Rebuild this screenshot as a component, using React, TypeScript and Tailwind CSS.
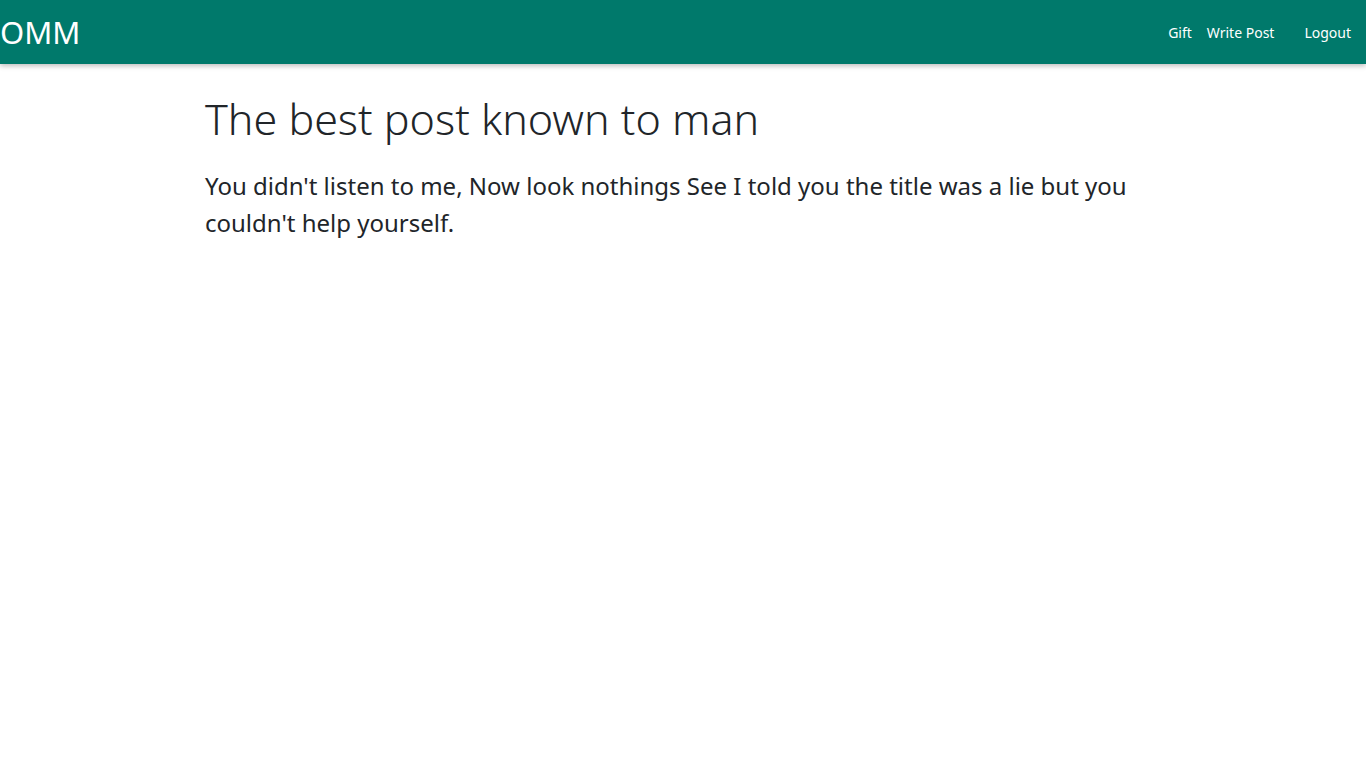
import React from 'react';

const App = () => {
  return (
    <div className="min-h-screen bg-white text-[#212529]" style={{ fontFamily: '"Noto Sans", "Open Sans", sans-serif' }}>
      <nav className="h-16 bg-[#00796b] shadow-[0_2px_5px_rgba(0,0,0,0.26)] flex items-center justify-between text-white">
        <span className="text-[31px] leading-none">OMM</span>
        <div className="flex items-center text-[14px] pr-[15px]">
          <a>Gift</a>
          <a className="pl-[15px]">Write Post</a>
          <a className="pl-[30px]">Logout</a>
        </div>
      </nav>

      <main className="w-[956px] mx-auto pt-[30px]">
        <h1 className="text-[43px] leading-[1.15] font-light mb-[24px]">The best post known to man</h1>
        <p className="text-[24px] leading-[37px]">
          You didn't listen to me, Now look nothings See I told you the title was a lie but you couldn't help yourself.
        </p>
      </main>
    </div>
  );
};

export default App;
